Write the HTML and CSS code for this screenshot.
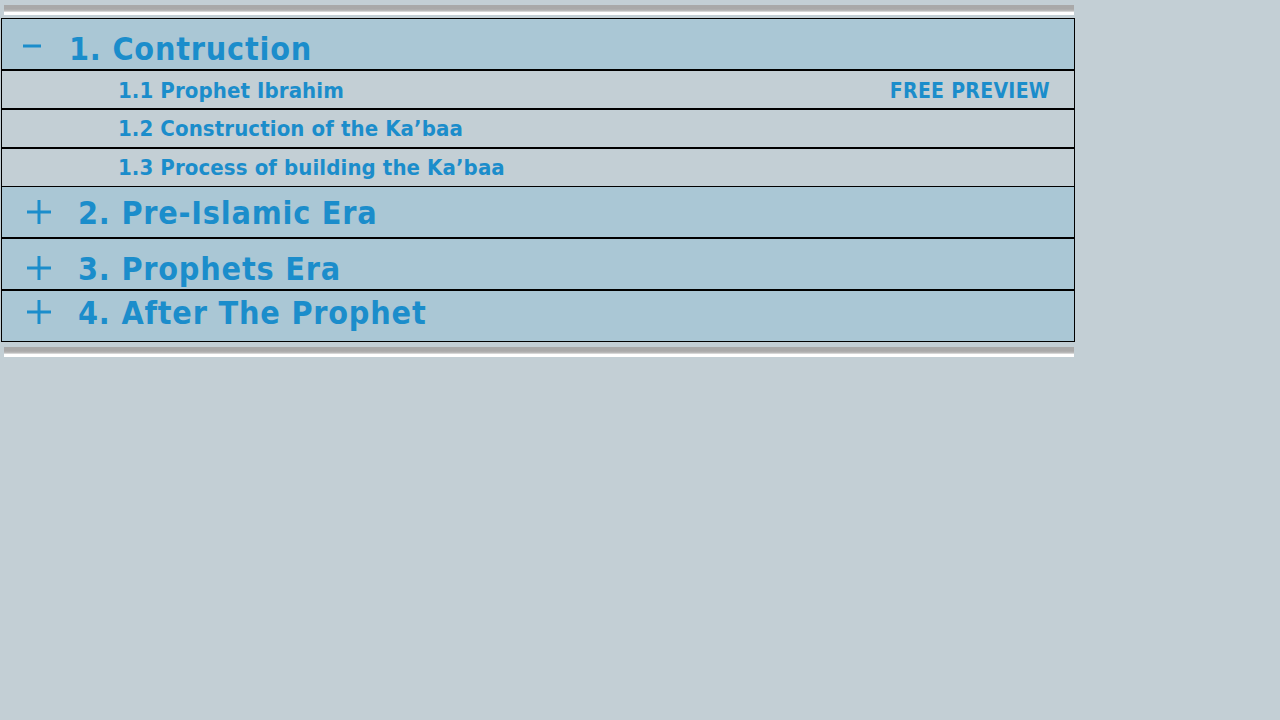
FILE: index.html
```html
<!DOCTYPE html>
<html>
<head>
<meta charset="utf-8">
<link rel="stylesheet" href="styles.css">
</head>
<body>
<div class="rule"></div>
<div class="course">
  <div class="section section--first">
    <span class="toggle toggle--open"><svg width="18" height="29" viewBox="0 0 18 29"><rect x="0" y="13.5" width="18" height="3" fill="#1b8dcb"/></svg></span>
    <span class="section-title">1. Contruction</span>
  </div>
  <div class="lesson lesson--first">
    <span class="lesson-title">1.1 Prophet Ibrahim</span>
    <span class="preview">FREE PREVIEW</span>
  </div>
  <div class="lesson">
    <span class="lesson-title">1.2 Construction of the Ka’baa</span>
  </div>
  <div class="lesson">
    <span class="lesson-title">1.3 Process of building the Ka’baa</span>
  </div>
  <div class="section section--two">
    <span class="toggle toggle--closed"><svg width="24" height="24" viewBox="0 0 24 24"><rect x="0" y="10.5" width="24" height="3" fill="#1b8dcb"/><rect x="10.5" y="0" width="3" height="24" fill="#1b8dcb"/></svg></span>
    <span class="section-title">2. Pre-Islamic Era</span>
  </div>
  <div class="section section--three">
    <span class="toggle toggle--closed"><svg width="24" height="24" viewBox="0 0 24 24"><rect x="0" y="10.5" width="24" height="3" fill="#1b8dcb"/><rect x="10.5" y="0" width="3" height="24" fill="#1b8dcb"/></svg></span>
    <span class="section-title">3. Prophets Era</span>
  </div>
  <div class="section section--four">
    <span class="toggle toggle--closed"><svg width="24" height="24" viewBox="0 0 24 24"><rect x="0" y="10.5" width="24" height="3" fill="#1b8dcb"/><rect x="10.5" y="0" width="3" height="24" fill="#1b8dcb"/></svg></span>
    <span class="section-title">4. After The Prophet</span>
  </div>
</div>
<div class="rule rule--bottom"></div>
</body>
</html>
```
FILE: styles.css
```css
html, body {
  margin: 0;
  padding: 0;
}
body {
  background: #c3cfd5;
  font-family: "DejaVu Sans Condensed", "DejaVu Sans", sans-serif;
  font-weight: bold;
  color: #1b8dcb;
  width: 1280px;
  height: 720px;
}
.rule {
  width: 1070px;
  height: 10px;
  margin: 5px 0 0 4px;
  background: linear-gradient(#a9a9a9 0, #a9a9a9 40%, #b9b9b9 55%, #d6d6d6 65%, #ffffff 75%, #ffffff 100%);
}
.rule--bottom {
  margin-top: 5px;
}
.course {
  width: 1074px;
  margin: 3px 0 0 1px;
}
.section {
  box-sizing: border-box;
  height: 52px;
  border: 1px solid #000;
  background: #aac7d5;
  display: flex;
  align-items: baseline;
  padding-left: 21px;
}
.section--first { padding-top: 12px; }
.section--two { border-top: none; height: 51px; padding-top: 10px; }
.section--three { padding-top: 14px; }
.section--four { padding-top: 6px; }
.section-title {
  font-size: 32px;
  line-height: 32px;
  letter-spacing: 0.8px;
}
.toggle {
  display: flex;
}
.toggle svg { display: block; }
.toggle--open {
  width: 46px;
}
.toggle--closed {
  width: 51px;
  padding-left: 4px;
}
.lesson {
  box-sizing: border-box;
  height: 39px;
  border: 1px solid #000;
  background: #c3cfd5;
  display: flex;
  justify-content: space-between;
  align-items: flex-start;
  padding: 8px 24px 0 116px;
  font-size: 22px;
  line-height: 22px;
  letter-spacing: 0.1px;
}
.lesson--first {
  padding-top: 9px;
}
.preview {
  font-size: 21px;
  letter-spacing: 0.3px;
}
```
